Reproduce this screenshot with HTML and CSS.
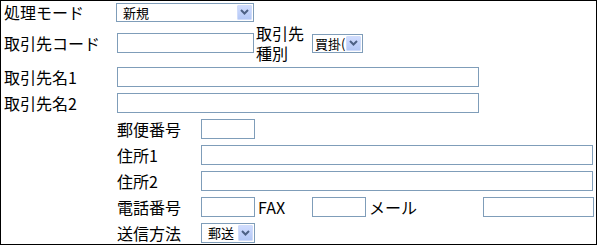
FILE: index.html
```html
<!DOCTYPE html>
<html>
<head>
  <meta charset="UTF-8">
  <title>取引先登録</title>
  <link rel="stylesheet" href="styles.css">
</head>
<body>
  <div class="frame">
    <div class="row row-mode">
      <span class="label">処理モード</span>
      <div class="select w-mode">
        <span class="select-text">新規</span>
        <span class="select-btn"><svg width="9" height="6" viewBox="0 0 9 6"><path d="M1 1 L4.5 4.5 L8 1" fill="none" stroke="#4d6185" stroke-width="2"/></svg></span>
      </div>
    </div>
    <div class="row row-code">
      <span class="label">取引先コード</span>
      <input type="text" class="field w-code">
      <span class="sublabel two-line">取引先<br>種別</span>
      <div class="select w-kind tight">
        <span class="select-text">買掛(</span>
        <span class="select-btn"><svg width="9" height="6" viewBox="0 0 9 6"><path d="M1 1 L4.5 4.5 L8 1" fill="none" stroke="#4d6185" stroke-width="2"/></svg></span>
      </div>
    </div>
    <div class="row">
      <span class="label">取引先名1</span>
      <input type="text" class="field w-name">
    </div>
    <div class="row">
      <span class="label">取引先名2</span>
      <input type="text" class="field w-name">
    </div>
    <div class="row">
      <span class="label"></span>
      <span class="label-sub">郵便番号</span>
      <input type="text" class="field w-small">
    </div>
    <div class="row">
      <span class="label"></span>
      <span class="label-sub">住所1</span>
      <input type="text" class="field w-addr">
    </div>
    <div class="row">
      <span class="label"></span>
      <span class="label-sub">住所2</span>
      <input type="text" class="field w-addr">
    </div>
    <div class="row">
      <span class="label"></span>
      <span class="label-sub">電話番号</span>
      <input type="text" class="field w-small">
      <span class="sublabel">FAX</span>
      <input type="text" class="field w-small">
      <span class="sublabel w-mail-label">メール</span>
      <input type="text" class="field w-mail">
    </div>
    <div class="row">
      <span class="label"></span>
      <span class="label-sub">送信方法</span>
      <div class="select w-small">
        <span class="select-text">郵送</span>
        <span class="select-btn"><svg width="9" height="6" viewBox="0 0 9 6"><path d="M1 1 L4.5 4.5 L8 1" fill="none" stroke="#4d6185" stroke-width="2"/></svg></span>
      </div>
    </div>
  </div>
</body>
</html>
```

FILE: styles.css
```css
body{
  margin:0;
  background:#fff;
  font-family:"Noto Sans CJK JP", sans-serif;
  color:#000;
}
.frame{
  width:597px;
  height:245px;
  box-sizing:border-box;
  border:1px solid #000;
  padding-top:1px;
  overflow:hidden;
  display:flex;
  flex-direction:column;
}
.row{
  display:flex;
  align-items:center;
  height:26px;
  flex-shrink:0;
}
.row-mode{height:20px;}
.row-code{height:42px;}

.label{
  width:113px;
  padding-left:3px;
  font-size:16px;
  line-height:18px;
  white-space:nowrap;
}
.label-sub{
  width:84px;
  font-size:16px;
  line-height:18px;
  white-space:nowrap;
}
.sublabel{
  width:54px;
  padding-left:3px;
  font-size:16px;
  line-height:18px;
  white-space:nowrap;
}
.two-line{
  padding-left:2px;
  width:56px;
  line-height:20px;
}
.w-mail-label{width:114px;}

.field{
  box-sizing:border-box;
  height:20px;
  margin:0;
  padding:0 2px;
  border:1px solid #7f9db9;
  background:#fff;
  font-size:13px;
  font-family:inherit;
}
.w-code{width:137px;}
.w-name{width:362px;}
.w-small{width:54px;}
.w-addr{width:392px;}
.w-mail{width:111px;}

.select{
  box-sizing:border-box;
  height:19px;
  border:1px solid #7f9db9;
  background:#fff;
  display:flex;
  align-items:stretch;
  overflow:hidden;
}
.select .select-text{
  flex:1;
  min-width:0;
  white-space:nowrap;
  padding-left:6px;
  font-size:13px;
  line-height:17px;
}
.select.tight .select-text{padding-left:2px;}
.select-btn{
  width:15px;
  margin:1px;
  box-sizing:border-box;
  border:1px solid #d0dcfa;
  border-radius:1px;
  background:linear-gradient(#d0dcfe, #b4c8f6);
  display:flex;
  align-items:center;
  justify-content:center;
}
.w-mode{width:138px; margin-left:-1px;}
.w-kind{width:51px;}
.select.w-small{height:20px;}
```
